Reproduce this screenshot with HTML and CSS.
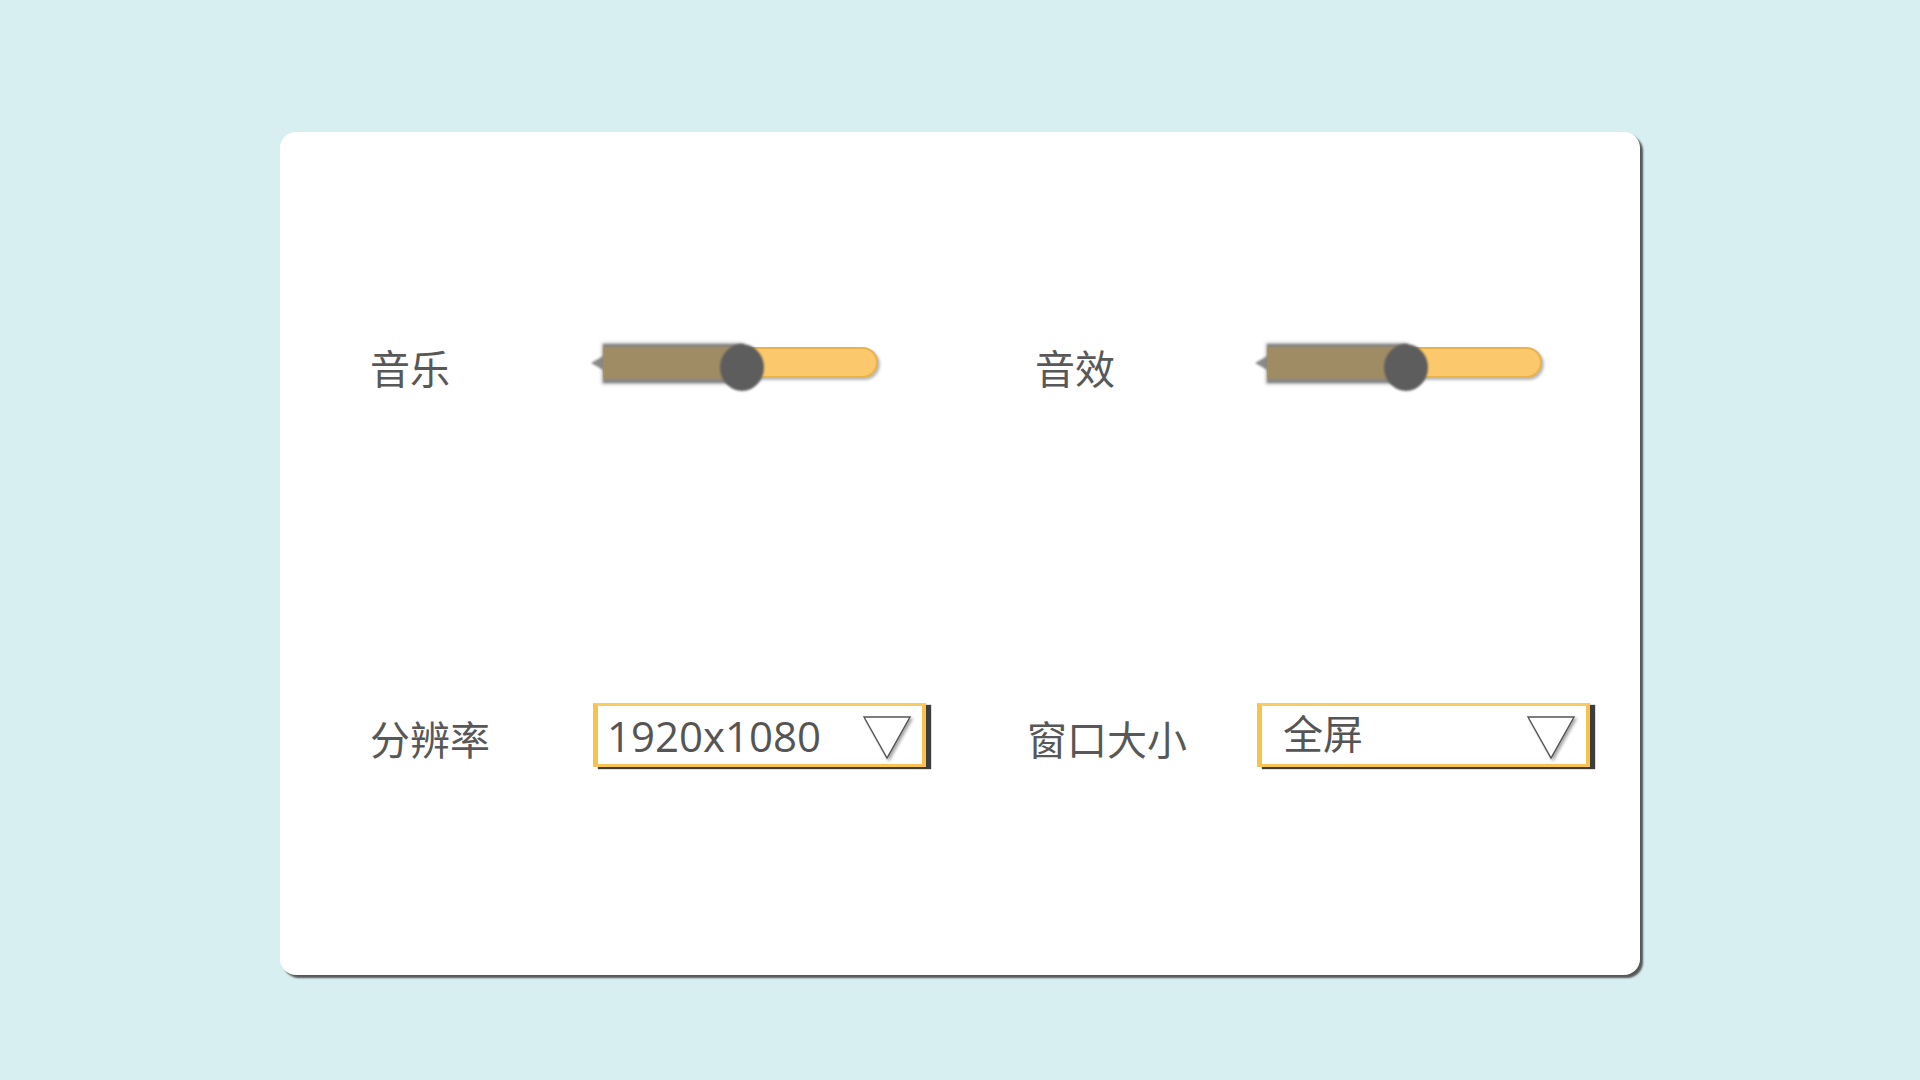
FILE: index.html
```html
<!DOCTYPE html>
<html lang="zh-CN">
<head>
<meta charset="utf-8">
<title>设置</title>
<link rel="stylesheet" href="styles.css">
</head>
<body>
<div class="page">
  <div class="card">
    <div class="grid">
      <div class="label">音乐</div>
      <div class="slider">
        <div class="rail" style="--value: 50%">
          <div class="track"></div>
          <div class="spike"></div>
          <div class="fill"></div>
          <div class="thumb"></div>
        </div>
      </div>
      <div class="spacer"></div>
      <div class="label label-shift">音效</div>
      <div class="slider">
        <div class="rail" style="--value: 50%">
          <div class="track"></div>
          <div class="spike"></div>
          <div class="fill"></div>
          <div class="thumb"></div>
        </div>
      </div>

      <div class="label">分辨率</div>
      <div class="select select-num">
        <span class="select-value">1920x1080</span>
        <svg class="arrow" width="50" height="46" viewBox="0 0 50 46"><polygon points="2,2 48,2 25,43" fill="#fff" stroke="#555" stroke-width="1.4" stroke-linejoin="miter"/></svg>
      </div>
      <div class="spacer"></div>
      <div class="label">窗口大小</div>
      <div class="select select-cjk">
        <span class="select-value">全屏</span>
        <svg class="arrow" width="50" height="46" viewBox="0 0 50 46"><polygon points="2,2 48,2 25,43" fill="#fff" stroke="#555" stroke-width="1.4" stroke-linejoin="miter"/></svg>
      </div>
    </div>
  </div>
</div>
</body>
</html>
```

FILE: styles.css
```css
html, body {
  margin: 0;
  padding: 0;
}

body {
  background: #d8eff1;
  font-family: "Noto Sans CJK SC", "Noto Sans", sans-serif;
  color: #575757;
}

.page {
  width: 1920px;
  height: 1080px;
  padding: 132px 0 0 280px;
  box-sizing: border-box;
}

.card {
  width: 1360px;
  height: 843px;
  box-sizing: border-box;
  background: #ffffff;
  border-radius: 16px;
  box-shadow: 3px 3px 2px rgba(60, 60, 60, 0.85);
  padding: 200px 0 0 90px;
}

.grid {
  display: grid;
  grid-template-columns: 223px 340px 94px 230px 340px;
  grid-template-rows: 66px 66px;
  row-gap: 305px;
  align-items: center;
}

.label {
  font-size: 40px;
  line-height: 1;
  padding-top: 4px;
  color: #585858;
  white-space: nowrap;
}

.label-shift {
  padding-left: 8px;
}

/* slider */
.slider {
  height: 56px;
  position: relative;
}

.rail {
  position: relative;
  margin-left: 10px;
  width: 275px;
  height: 56px;
}

.track {
  position: absolute;
  left: 0;
  right: 0;
  top: 10px;
  height: 31px;
  box-sizing: border-box;
  background: #fbc96c;
  border: 2px solid #eab24a;
  border-radius: 0 16px 16px 0;
  box-shadow: 2px 2px 3px rgba(0, 0, 0, 0.28);
}

.fill {
  position: absolute;
  left: 0;
  top: 7px;
  width: calc(var(--value) + 2px);
  height: 39px;
  box-sizing: border-box;
  background: #9f8c65;
  border-top: 3px solid #858380;
  border-bottom: 4px solid #868686;
  box-shadow: 0 0 3px 1px rgba(120, 120, 120, 0.55);
  filter: blur(1px);
}

.spike {
  position: absolute;
  left: -12px;
  top: 18px;
  width: 0;
  height: 0;
  border-top: 8px solid transparent;
  border-bottom: 8px solid transparent;
  border-right: 14px solid #8b8b8b;
  filter: blur(1.2px);
}

.thumb {
  position: absolute;
  left: calc(var(--value) - 21px);
  top: 7px;
  width: 44px;
  height: 47px;
  border-radius: 50%;
  background: #5d5d5d;
  filter: blur(1.2px);
}

/* select */
.select {
  height: 64px;
  width: 333px;
  align-self: start;
  box-sizing: border-box;
  background: #ffffff;
  border-left: 5px solid #f8c24e;
  border-top: 3px solid #fbcb62;
  border-bottom: 3px solid #f9c454;
  border-right: 4px solid #f8c24e;
  box-shadow: 5px 2px 1px rgba(40, 40, 40, 0.9);
  display: flex;
  align-items: center;
  justify-content: space-between;
  padding-right: 10px;
}

.select-num {
  padding-left: 9px;
}

.select-cjk {
  padding-left: 21px;
}

.select-value {
  color: #555555;
  line-height: 1;
  white-space: nowrap;
}

.select-num .select-value {
  font-family: "Open Sans", "Noto Sans", sans-serif;
  font-size: 42px;
  padding-top: 2px;
}

.select-cjk .select-value {
  font-family: "Noto Sans CJK SC", sans-serif;
  font-size: 40px;
  padding-bottom: 6px;
}

.arrow {
  display: block;
  filter: drop-shadow(2px 2px 1.5px rgba(0, 0, 0, 0.35));
  margin-top: 6px;
}
```
